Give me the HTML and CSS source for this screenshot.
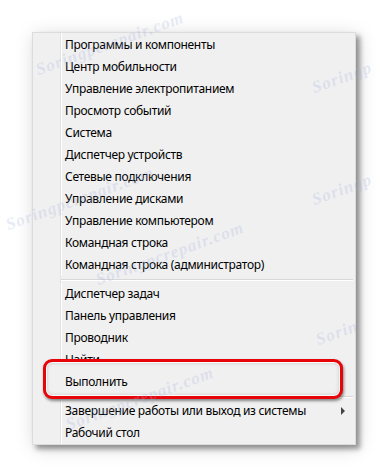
FILE: index.html
```html
<!DOCTYPE html>
<html lang="ru">

<head>
    <meta charset="UTF-8">
    <meta name="viewport" content="width=device-width, initial-scale=1.0">
    <title>Меню Win+X</title>
    <link rel="stylesheet" href="styles.css">
</head>

<body>
    <div class="stage">
        <!-- Context menu -->
        <div class="menu">
            <ul class="items">
                <li class="item">Программы и компоненты</li>
                <li class="item">Центр мобильности</li>
                <li class="item">Управление электропитанием</li>
                <li class="item">Просмотр событий</li>
                <li class="item">Система</li>
                <li class="item">Диспетчер устройств</li>
                <li class="item">Сетевые подключения</li>
                <li class="item">Управление дисками</li>
                <li class="item">Управление компьютером</li>
                <li class="item">Командная строка</li>
                <li class="item">Командная строка (администратор)</li>
                <li class="sep"></li>
                <li class="item">Диспетчер задач</li>
                <li class="item">Панель управления</li>
                <li class="item">Проводник</li>
                <li class="item">Найти</li>
                <li class="item item-marked">Выполнить</li>
                <li class="sep"></li>
                <li class="item sub">Завершение работы или выход из системы</li>
                <li class="item">Рабочий стол</li>
            </ul>

            <!-- red highlight around "Выполнить" -->
            <div class="mark"></div>
        </div>

        <!-- watermarks -->
        <span class="wm wm1">Soringpcrepair.com</span>
        <span class="wm wm2">Soringpcrepair.com</span>
        <span class="wm wm3">Soringp</span>
        <span class="wm wm4">Soringp</span>
        <span class="wm wm5">Soringpcrepair.com</span>
        <span class="wm wm6">Soringpcrepair.com</span>
        <span class="wm wm7">Sorin</span>
    </div>
</body>

</html>
```

FILE: styles.css
```css
body {
    margin: 0;
    background-color: #fff;
    font-family: "Noto Sans", "Open Sans", sans-serif;
    font-size: 12px;
    letter-spacing: -0.3px;
    color: #000;
}

.stage {
    position: relative;
    width: 389px;
    height: 476px;
    overflow: hidden;
    padding: 32px 0 0 32px;
    box-sizing: border-box;
}

.menu {
    position: relative;
    width: 324px;
    box-sizing: border-box;
    border: 1px solid #dcdcdc;
    padding: 1px 0 0;
    background: linear-gradient(to right, #f0f0f0 27px, #e2e3e3 27px, #e2e3e3 28px, #fff 28px, #fff 29px, #f0f0f0 29px);
    box-shadow: 4px 4px 5px rgba(0, 0, 0, 0.38), 2px 3px 18px rgba(0, 0, 0, 0.16);
}

.items {
    list-style: none;
    margin: 0;
    padding: 0;
}

.item {
    position: relative;
    height: 22px;
    line-height: 22px;
    padding-left: 32px;
    white-space: nowrap;
}

.item-marked {
    z-index: 2;
}

.sub::after {
    content: "";
    position: absolute;
    right: 10px;
    top: 7px;
    border-left: 4px solid #444;
    border-top: 4px solid transparent;
    border-bottom: 4px solid transparent;
}

.sep {
    height: 7px;
    margin: 0 2px 0 28px;
    background: linear-gradient(#f0f0f0 3px, #d7d7d7 3px, #d7d7d7 4px, #fff 4px, #fff 5px, #f0f0f0 5px);
}

.mark {
    position: absolute;
    z-index: 1;
    left: 10px;
    top: 326px;
    width: 300px;
    height: 40px;
    box-sizing: border-box;
    border: 3px solid #e8050a;
    border-radius: 9px;
    background-color: #f0f0f0;
    box-shadow: 1px 2px 3px rgba(0, 0, 0, 0.45), inset 0 0 0 1px rgba(255, 255, 255, 0.9), inset 0 0 4px rgba(0, 0, 0, 0.25);
}

.wm {
    position: absolute;
    z-index: 3;
    font-family: "Liberation Serif", serif;
    font-style: italic;
    font-weight: bold;
    font-size: 17px;
    letter-spacing: 1px;
    color: rgba(160, 175, 220, 0.25);
    white-space: nowrap;
    transform: rotate(-20deg);
    transform-origin: left bottom;
    pointer-events: none;
}

.wm1 { left: 40px; top: 60px; }
.wm2 { left: 10px; top: 215px; }
.wm3 { left: 316px; top: 78px; }
.wm4 { left: 316px; top: 190px; }
.wm5 { left: 100px; top: 270px; }
.wm6 { left: 70px; top: 415px; }
.wm7 { left: 320px; top: 330px; }
```
